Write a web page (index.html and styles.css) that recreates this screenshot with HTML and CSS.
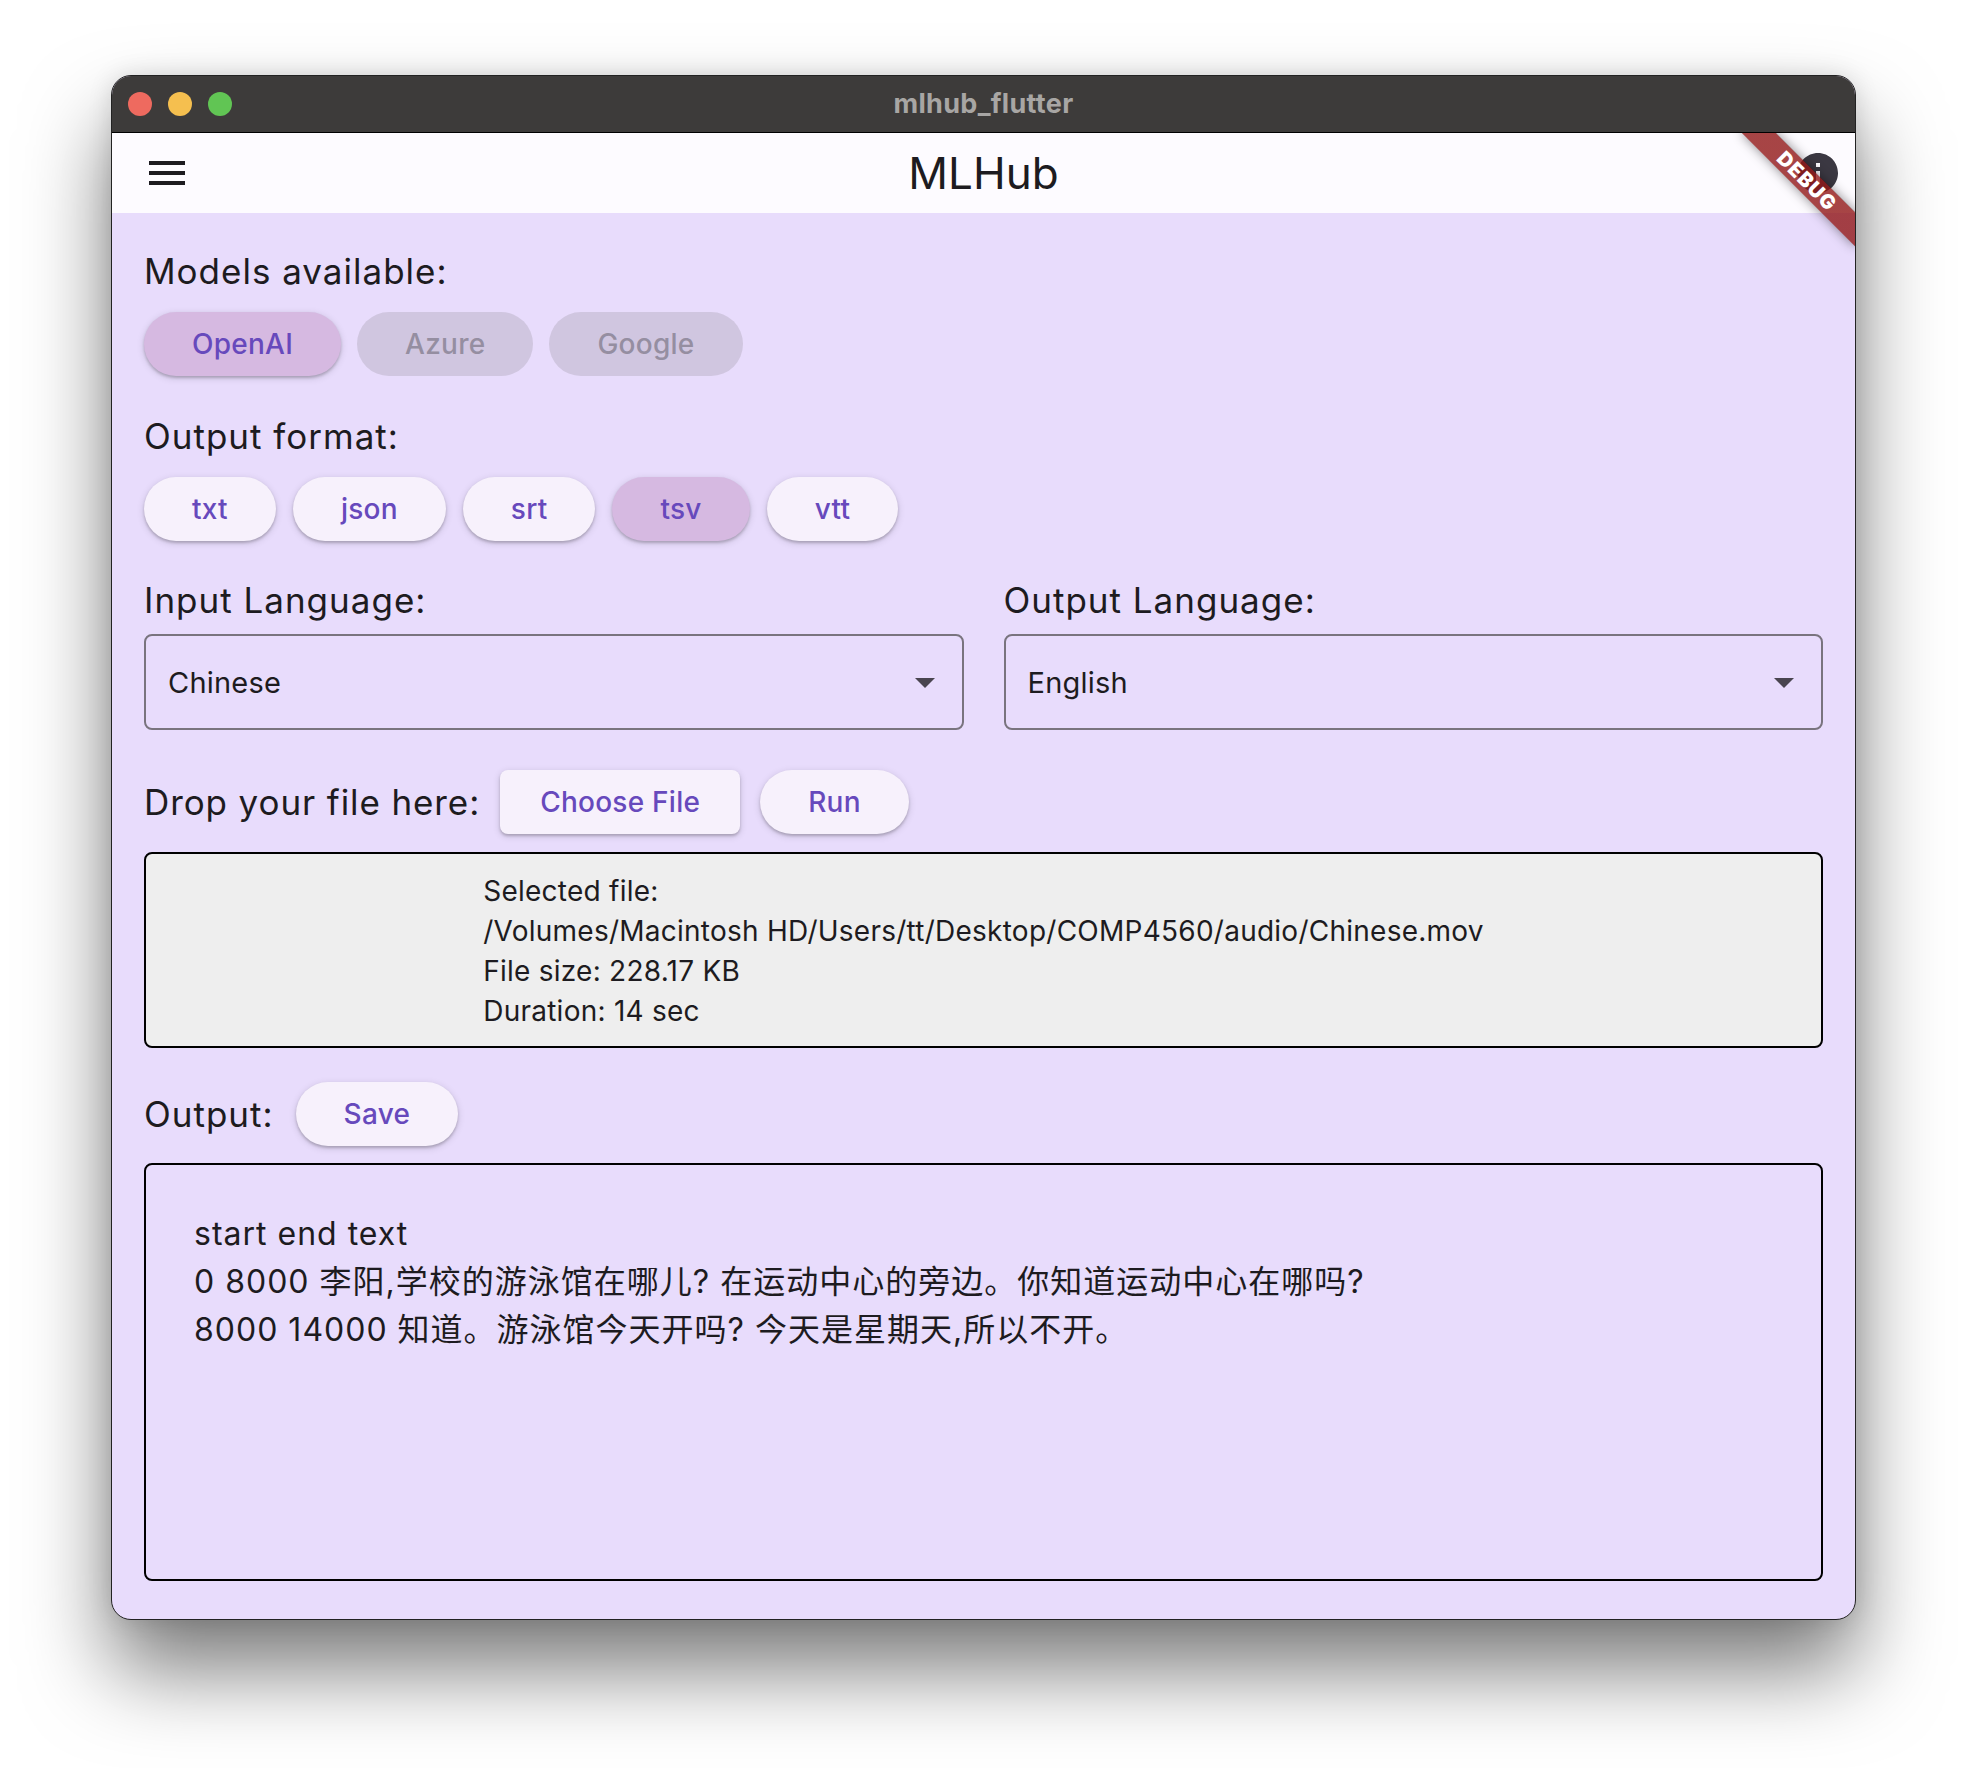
FILE: index.html
```html
<!DOCTYPE html>
<html>
<head>
<meta charset="utf-8">
<title>mlhub_flutter</title>
<link rel="stylesheet" href="styles.css">
</head>
<body>
<div class="window">
  <div class="titlebar">
    <div class="lights">
      <span class="light red"></span>
      <span class="light yellow"></span>
      <span class="light green"></span>
    </div>
    <div class="wtitle">mlhub_flutter</div>
    <div></div>
  </div>
  <div class="app">
    <header class="appbar">
      <svg class="menu" viewBox="0 0 24 24" width="48" height="48"><path d="M3 18h18v-2H3v2zm0-5h18v-2H3v2zm0-7v2h18V6H3z" fill="#1d1b20"/></svg>
      <div class="apptitle">MLHub</div>
      <svg class="info" viewBox="0 0 24 24" width="48" height="48"><path d="M12 2C6.48 2 2 6.48 2 12s4.48 10 10 10 10-4.48 10-10S17.52 2 12 2zm1 15h-2v-6h2v6zm0-8h-2V7h2v2z" fill="#3b3842"/></svg>
    </header>
    <main class="content">
      <div class="label">Models available:</div>
      <div class="btnrow models">
        <button class="btn sel">OpenAI</button>
        <button class="btn dis">Azure</button>
        <button class="btn dis">Google</button>
      </div>

      <div class="label sect">Output format:</div>
      <div class="btnrow">
        <button class="btn">txt</button>
        <button class="btn">json</button>
        <button class="btn">srt</button>
        <button class="btn sel">tsv</button>
        <button class="btn">vtt</button>
      </div>

      <div class="langs">
        <div class="lang">
          <div class="label">Input Language:</div>
          <div class="select">
            <span>Chinese</span>
            <svg viewBox="0 0 24 24" width="48" height="48"><path d="M7 10l5 5 5-5z" fill="#49454f"/></svg>
          </div>
        </div>
        <div class="lang">
          <div class="label">Output Language:</div>
          <div class="select">
            <span>English</span>
            <svg viewBox="0 0 24 24" width="48" height="48"><path d="M7 10l5 5 5-5z" fill="#49454f"/></svg>
          </div>
        </div>
      </div>

      <div class="row droprow">
        <div class="label rowlabel">Drop your file here:</div>
        <button class="btn sq">Choose File</button>
        <button class="btn">Run</button>
      </div>

      <div class="filebox">
        <div class="fileinfo">
          <div>Selected file:</div>
          <div>/Volumes/Macintosh HD/Users/tt/Desktop/COMP4560/audio/Chinese.mov</div>
          <div>File size: 228.17 KB</div>
          <div>Duration: 14 sec</div>
        </div>
      </div>

      <div class="row outrow">
        <div class="label rowlabel">Output:</div>
        <button class="btn">Save</button>
      </div>

      <div class="outbox">
        <div>start end text</div>
        <div>0 8000 李阳,学校的游泳馆在哪儿? 在运动中心的旁边。你知道运动中心在哪吗?</div>
        <div>8000 14000 知道。游泳馆今天开吗? 今天是星期天,所以不开。</div>
      </div>
    </main>
    <div class="debug"><div class="debug-band">DEBUG</div></div>
  </div>
</div>
</body>
</html>
```

FILE: styles.css
```css
* { box-sizing: border-box; }
html, body { margin: 0; padding: 0; }
body {
  background: #ffffff;
  font-family: "Inter", "Noto Sans CJK SC", sans-serif;
  width: 1968px;
  height: 1768px;
  overflow: hidden;
}
.window {
  width: 1745px;
  height: 1545px;
  margin: 75px 0 0 111px;
  border: 1px solid #222;
  border-radius: 20px;
  overflow: hidden;
  display: flex;
  flex-direction: column;
  background: #e8dcfc;
  box-shadow: 0 50px 85px rgba(0,0,0,0.52), 0 0 24px rgba(0,0,0,0.12);
}
.titlebar {
  flex: none;
  height: 57px;
  background: #3d3b3a;
  border-bottom: 1px solid #000;
  display: grid;
  grid-template-columns: 1fr auto 1fr;
  align-items: center;
}
.lights { display: flex; gap: 16px; padding-left: 16px; }
.light { width: 24px; height: 24px; border-radius: 50%; }
.red { background: #ee6a5f; }
.yellow { background: #f5bf4f; }
.green { background: #61c554; }
.wtitle { font-weight: 700; font-size: 27px; letter-spacing: 0.3px; color: #a8a6a4; margin-top: -2px; }

.app {
  flex: 1;
  position: relative;
  overflow: hidden;
  display: flex;
  flex-direction: column;
}
.appbar {
  flex: none;
  height: 80px;
  background: #fdfbff;
  display: grid;
  grid-template-columns: 1fr auto 1fr;
  align-items: center;
  padding: 0 31px;
}
.menu { display: block; }
.apptitle { font-size: 44px; color: #1d1b20; }
.info { justify-self: end; margin-right: -18px; display: block; }

.content { padding: 32px 32px 0; color: #1d1b20; }
.label { font-size: 35px; line-height: 52px; letter-spacing: 1px; color: #1d1b20; }
.sect { margin-top: 34px; }
.btnrow { display: flex; gap: 17px; margin-top: 15px; }
.btnrow.models { gap: 16px; }
.btn {
  height: 64px;
  padding: 0 48px;
  border: none;
  border-radius: 32px;
  font-family: "Inter", sans-serif;
  font-weight: 500;
  font-size: 28px;
  letter-spacing: 0.25px;
  color: #6749bc;
  background: #f7f1fc;
  box-shadow: 0 2px 3px rgba(0,0,0,0.22), 0 2px 6px 2px rgba(0,0,0,0.08);
}
.btn.sel { background: #d6b9e1; }
.btn.dis { background: #d0c6e0; color: #958ea1; box-shadow: none; }
.btn.sq { border-radius: 8px; padding: 0 40px; }

.langs { display: grid; grid-template-columns: 1fr 1fr; gap: 40px; margin-top: 33px; }
.select {
  margin-top: 8px;
  height: 96px;
  border: 2px solid #79747e;
  border-radius: 8px;
  display: flex;
  align-items: center;
  justify-content: space-between;
  padding: 0 13px 0 22px;
  font-size: 29px;
  letter-spacing: 0.2px;
  color: #1d1b20;
}
.select svg { display: block; }

.row { display: flex; align-items: center; gap: 20px; }
.droprow { margin-top: 40px; }
.droprow .rowlabel { letter-spacing: 0.9px; }
.outrow .rowlabel { margin-right: 2px; }
.filebox {
  margin-top: 18px;
  height: 196px;
  background: #eeeeee;
  border: 2px solid #000;
  border-radius: 8px;
  display: flex;
  align-items: center;
  justify-content: center;
  font-size: 28px;
  line-height: 40px;
  letter-spacing: 0.25px;
  color: #1d1b20;
}
.fileinfo { padding-top: 2px; }
.outrow { margin-top: 34px; }
.outbox {
  margin-top: 17px;
  height: 418px;
  border: 2px solid #000;
  border-radius: 8px;
  padding: 45px 48px 0;
  font-size: 32px;
  line-height: 48px;
  letter-spacing: 1px;
  color: #1d1b20;
}

.debug {
  position: absolute;
  top: 0;
  right: 0;
  width: 0;
  height: 0;
  transform: rotate(45deg);
}
.debug-band {
  position: absolute;
  left: -80px;
  top: 56px;
  width: 160px;
  height: 24px;
  background: linear-gradient(rgba(183,28,28,0.63), rgba(183,28,28,0.63)), rgba(0,0,0,0.45);
  box-shadow: 0 0 12px rgba(0,0,0,0.45);
  color: #fff;
  font-family: "Inter", sans-serif;
  font-weight: 900;
  font-size: 20px;
  line-height: 24px;
  text-align: center;
  letter-spacing: 1px;
}
```
